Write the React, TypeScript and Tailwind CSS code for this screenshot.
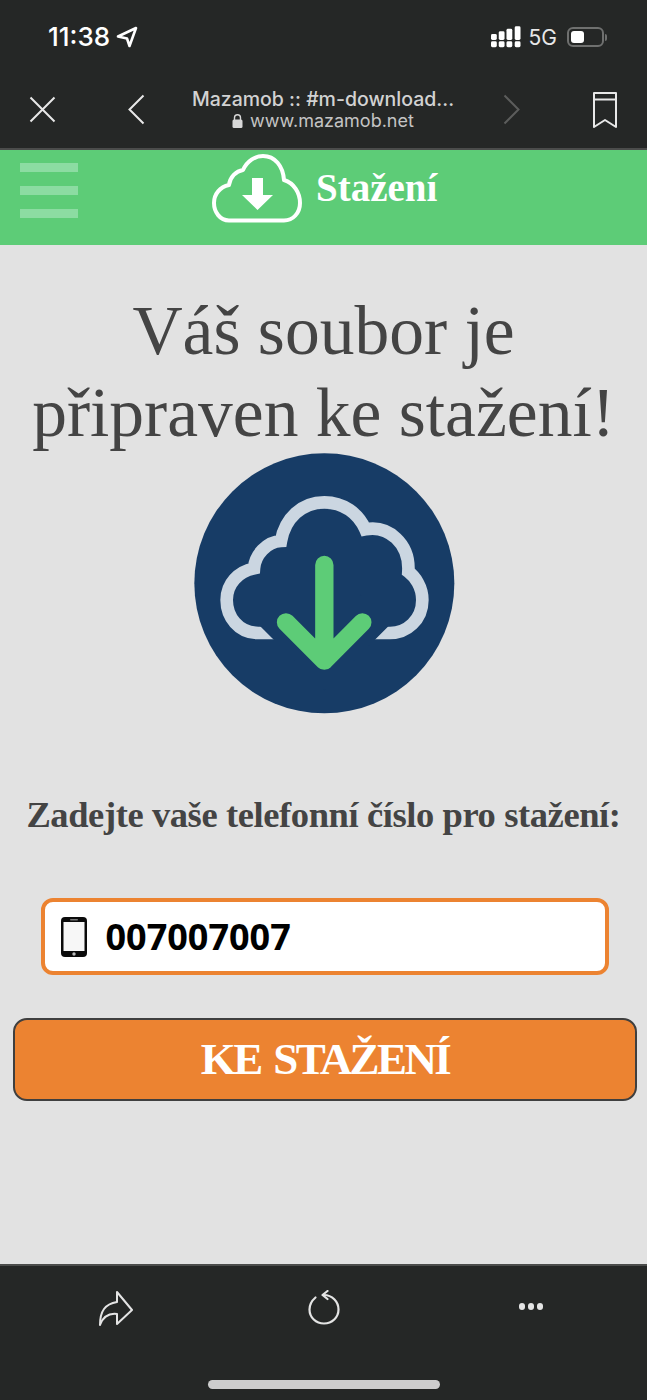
export default function App() {
  return (
    <div className="flex h-[1400px] w-[647px] flex-col overflow-hidden bg-[#e2e2e2] font-['Liberation_Serif',serif]">
      {/* ios chrome */}
      <div className="h-[150px] shrink-0 border-b-2 border-[#4b4c4b] bg-[#252726] font-['Inter',sans-serif] text-white">
        <div className="flex h-[74px] items-center justify-between pl-[48px] pr-[40px]">
          <div className="flex items-center gap-[6px]">
            <span className="text-[26px] font-medium leading-none">11:38</span>
            <svg width="22" height="22" viewBox="0 0 22 22" fill="none" stroke="white" strokeWidth="2.6" strokeLinejoin="round">
              <path d="M2 10.500 20 2 13.500 20 11 12.500Z" />
            </svg>
          </div>
          <div className="flex items-center gap-[8px]">
            <svg width="30" height="22" viewBox="0 0 31 22" fill="white">
              <rect x="0" y="8" width="6" height="6" rx="1.500" />
              <rect x="0" y="15.500" width="6" height="6" rx="1.500" />
              <rect x="8" y="5" width="6" height="9" rx="1.500" />
              <rect x="8" y="15.500" width="6" height="6" rx="1.500" />
              <rect x="16" y="2.500" width="6" height="11.500" rx="1.500" />
              <rect x="16" y="15.500" width="6" height="6" rx="1.500" />
              <rect x="24.500" y="0" width="6" height="14" rx="1.500" />
              <rect x="24.500" y="15.500" width="6" height="6" rx="1.500" />
            </svg>
            <span className="text-[21px] leading-none text-[#e8e8e8]">5G</span>
            <div className="ml-[2px] flex items-center gap-[1px]">
              <div className="h-[20px] w-[37px] rounded-[6px] border-2 border-[#6f706f] p-[2px]">
                <div className="h-full w-[13px] rounded-[3px] bg-white" />
              </div>
              <div className="h-[7px] w-[2px] rounded-r-sm bg-[#6f706f]" />
            </div>
          </div>
        </div>
        <div className="flex h-[74px] items-start pl-[29px]">
          <svg className="mt-[22px]" width="27" height="27" viewBox="0 0 27 27" stroke="#e8e8e8" strokeWidth="2" fill="none">
            <path d="M1.500 1.500 25.500 25.500M25.500 1.500 1.500 25.500" />
          </svg>
          <svg className="ml-[71px] mt-[20px]" width="19" height="31" viewBox="0 0 19 31" stroke="#e8e8e8" strokeWidth="2" fill="none">
            <path d="M16.500 1.500 2.500 15.500 16.500 29.500" />
          </svg>
          <div className="ml-[12px] flex w-[330px] flex-col items-center pt-[14px] text-[#d2d2d2]">
            <span className="whitespace-nowrap text-[19.500px] font-medium leading-[22px]">Mazamob :: #m-download...</span>
            <div className="flex items-center gap-[7px] text-[#c4c4c4]">
              <svg width="11" height="14" viewBox="0 0 11 14" fill="#d8d8d8">
                <rect x="0.500" y="5.500" width="10" height="8.500" rx="1.500" />
                <path d="M2.500 6V3.800a3 3 0 0 1 6 0V6" fill="none" stroke="#d8d8d8" strokeWidth="1.400" />
              </svg>
              <span className="text-[18px] leading-[22px]">www.mazamob.net</span>
            </div>
          </div>
          <svg className="ml-[14px] mt-[20px]" width="19" height="31" viewBox="0 0 19 31" stroke="#5c5d5c" strokeWidth="2" fill="none">
            <path d="M2.500 1.500 16.500 15.500 2.500 29.500" />
          </svg>
          <svg className="ml-[71px] mt-[17px]" width="26" height="38" viewBox="0 0 26 38" stroke="#e8e8e8" strokeWidth="2" fill="none">
            <path d="M2 2H24V36L13 29 2 36ZM2 8.500H24" strokeLinejoin="round" />
          </svg>
        </div>
      </div>

      {/* green header */}
      <div className="relative flex h-[95px] shrink-0 items-start bg-[#5dcc77]">
        <div className="absolute left-[20px] top-[13px] flex w-[58px] flex-col gap-[14px]">
          <div className="h-[9px] bg-[#8cdca2]" />
          <div className="h-[9px] bg-[#8cdca2]" />
          <div className="h-[9px] bg-[#8cdca2]" />
        </div>
        <div className="ml-[212px] mt-[4px] flex items-center gap-[14px]">
          <svg width="90" height="69" viewBox="0 0 90 69" fill="none">
            <path d="M17 66.500C8 66.500 2 58 2 49 2 40 8 33 17 31 18 23 24 17 31 16 35 7 43 2 51 2 63 2 71 12 72 26 82 29 88 39 88 49 88 59 81 66.500 72 66.500Z" stroke="white" strokeWidth="4" strokeLinejoin="round" />
            <path d="M40 24H51V41H61L45.500 56 30 41H40Z" fill="white" />
          </svg>
          <span className="mb-[2px] text-[39px] font-bold leading-none text-white">Stažení</span>
        </div>
      </div>

      {/* content */}
      <main className="flex flex-1 flex-col items-center text-[#444444]">
        <h1 className="mt-[45px] whitespace-nowrap text-center text-[69.500px] font-normal leading-[82px]">
          Váš soubor je
          <br />
          připraven ke stažení!
        </h1>
        <svg className="ml-[2px] mt-[-14px]" width="290" height="290" viewBox="0 0 870 870" fill="none">
          <circle cx="433" cy="430" r="390" fill="#173c66" />
          <path d="M300 579H235C175 579 140 530 140 480 140 430 175 395 222 385 225 345 260 305 303 303 315 235 365 187 433 187 490 187 535 220 556 268 625 255 690 310 685 395 705 410 727 440 727 480 727 540 680 579 630 579H560" stroke="#cbd6e1" strokeWidth="38" />
          <path d="M280 509 433 662 586 509" stroke="#173c66" strokeWidth="126" />
          <path d="M433 375V660M318 547 433 662 547 547" stroke="#5dcc77" strokeWidth="55" strokeLinecap="round" strokeLinejoin="round" />
        </svg>
        <p className="mt-[63px] whitespace-nowrap text-[36.500px] font-bold leading-[44px] tracking-[-0.4px]">Zadejte vaše telefonní číslo pro stažení:</p>
        <div className="ml-[2px] mt-[61px] flex h-[77px] w-[568px] items-center gap-[19px] rounded-[12px] border-[4px] border-[#ec8331] bg-white pl-[16px]">
          <svg width="26" height="40" viewBox="0 0 26 40">
            <rect width="26" height="40" rx="4" fill="#0b0b0b" />
            <rect x="2.500" y="5" width="21" height="29" fill="#f7f7f7" />
            <rect x="9" y="2" width="8" height="1.500" rx="0.750" fill="#777" />
            <circle cx="13" cy="37" r="1.700" fill="#bbb" />
          </svg>
          <span className="font-['Open_Sans',sans-serif] text-[36px] font-bold leading-none text-black">007007007</span>
        </div>
        <button className="ml-[3px] mt-[43px] flex h-[83px] w-[624px] items-center justify-center rounded-[14px] border-2 border-[#3f3f3f] bg-[#ec8331] text-[45px] font-bold leading-none tracking-[-2.600px] text-white [word-spacing:4px]">
          KE STAŽENÍ
        </button>
      </main>

      {/* bottom bar */}
      <footer className="flex h-[136px] shrink-0 flex-col border-t-2 border-[#4b4c4b] bg-[#252726]">
        <div className="flex items-start pl-[98px] pt-[24px]">
          <svg width="36" height="36" viewBox="0 0 36 36" fill="none" stroke="#e4e4e4" strokeWidth="2" strokeLinejoin="round">
            <path d="M2 35C2 21 7 14 19 12V2L34 20 19 34V24C11 23 5 27 2 35Z" />
          </svg>
          <svg className="ml-[174px]" width="32" height="35" viewBox="0 0 32 35" fill="none" stroke="#e4e4e4" strokeWidth="2.200" strokeLinecap="round" strokeLinejoin="round">
            <path d="M7.500 7.500C4 10.500 1.500 14.500 1.500 19.500 1.500 27.500 8 33.500 16 33.500S30.500 27.500 30.500 19.500 24 5 16 5" />
            <path d="M19.500 1 14.500 5 19.500 9" />
          </svg>
          <div className="ml-[179px] mt-[13px] flex gap-[3px]">
            <div className="h-[7px] w-[6px] rounded-full bg-[#e4e4e4]" />
            <div className="h-[7px] w-[6px] rounded-full bg-[#e4e4e4]" />
            <div className="h-[7px] w-[6px] rounded-full bg-[#e4e4e4]" />
          </div>
        </div>
        <div className="mb-[11px] ml-[208px] mt-auto h-[9px] w-[232px] rounded-full bg-[#cdcdcd]" />
      </footer>
    </div>
  );
}
